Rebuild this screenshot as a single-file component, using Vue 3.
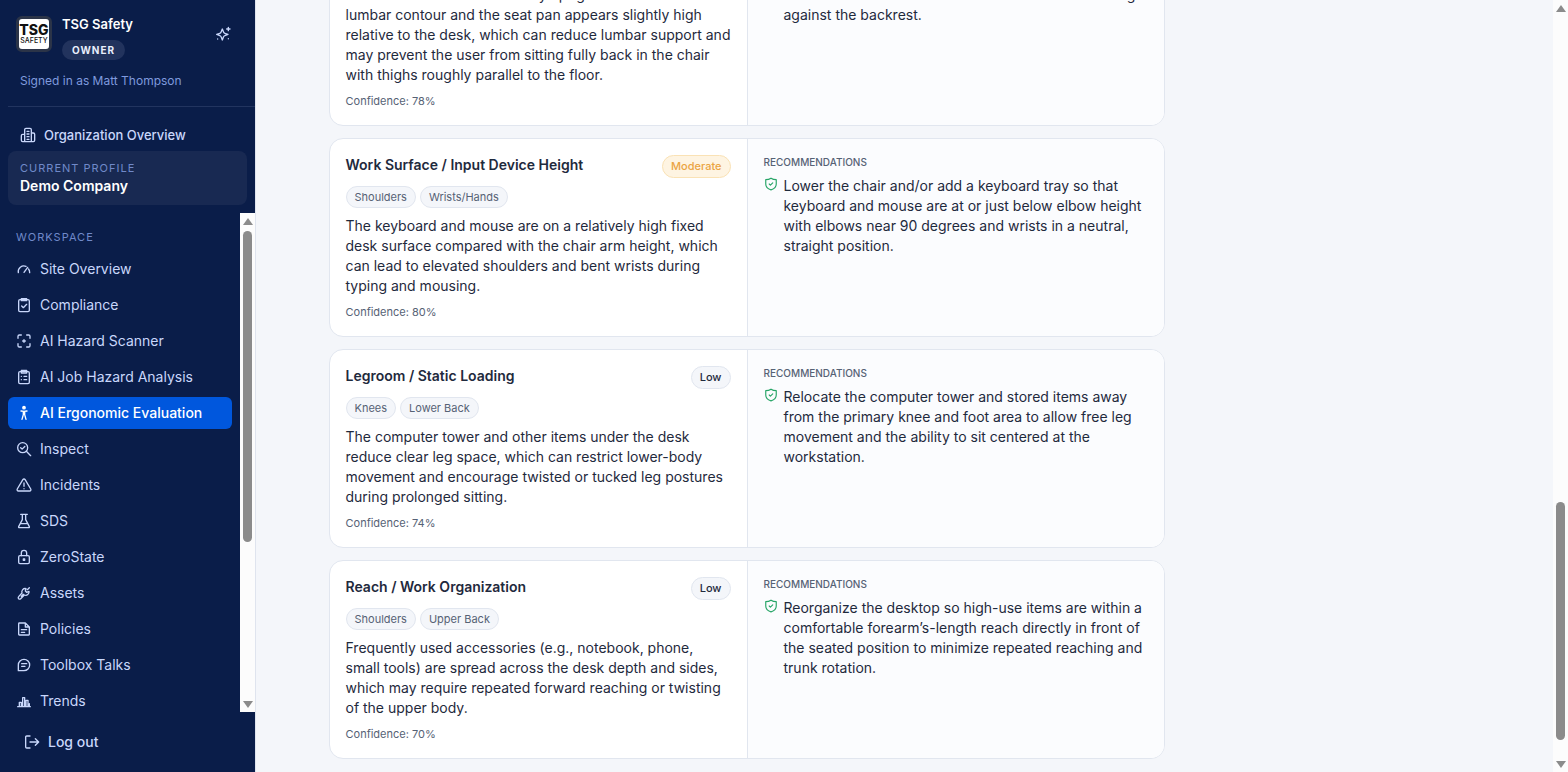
<template>
  <div class="app-shell">
    <aside class="sidebar">
      <header class="sidebar-header">
        <div class="org-row">
          <div class="logo" role="img" aria-label="TSG Safety">
            <span class="logo-top">TSG</span>
            <span class="logo-bottom">SAFETY</span>
          </div>
          <div class="org-info">
            <div class="org-name">TSG Safety</div>
            <span class="role-badge">OWNER</span>
          </div>
          <button class="icon-btn" type="button" aria-label="What's new">
            <svg class="icon" viewBox="0 0 24 24">
              <path d="M11 4.500 12.800 9a3 3 0 0 0 1.900 1.900L19.500 12.500l-4.800 1.800a3 3 0 0 0-1.900 1.900L11 21l-1.800-4.800a3 3 0 0 0-1.900-1.900L2.500 12.500l4.800-1.600A3 3 0 0 0 9.200 9z" />
              <path d="M20 2v5M17.500 4.500h5M20 19v.1M4 19.500v.1" />
            </svg>
          </button>
        </div>
        <p class="signed-in">Signed in as Matt Thompson</p>
      </header>

      <a class="org-link" href="#organization">
        <svg class="icon" viewBox="0 0 24 24" v-html="icons.building"></svg>
        <span>Organization Overview</span>
      </a>

      <div class="profile">
        <div class="profile-label">CURRENT PROFILE</div>
        <div class="profile-name">Demo Company</div>
      </div>

      <div class="nav-area">
        <nav class="nav">
          <div class="nav-heading">WORKSPACE</div>
          <a
            v-for="item in navItems"
            :key="item.label"
            :href="'#' + item.icon"
            class="nav-item"
            :class="{ active: item.active }"
          >
            <svg class="icon" viewBox="0 0 24 24" v-html="icons[item.icon]"></svg>
            <span>{{ item.label }}</span>
          </a>
        </nav>
        <div class="scrollbar" aria-hidden="true">
          <span class="arrow up"></span>
          <div class="track">
            <div class="thumb nav-thumb"></div>
          </div>
          <span class="arrow down"></span>
        </div>
      </div>

      <button class="logout" type="button">
        <svg class="icon" viewBox="0 0 24 24" v-html="icons.logout"></svg>
        <span>Log out</span>
      </button>
    </aside>

    <main class="main">
      <div class="content">
        <div class="findings">
          <article v-for="finding in findings" :key="finding.title" class="finding">
            <section class="finding-detail">
              <div class="finding-head">
                <h3>{{ finding.title }}</h3>
                <span class="badge" :class="finding.severity.toLowerCase()">{{ finding.severity }}</span>
              </div>
              <div class="tags">
                <span v-for="tag in finding.tags" :key="tag" class="tag">{{ tag }}</span>
              </div>
              <p class="description">{{ finding.description }}</p>
              <p class="confidence">Confidence: {{ finding.confidence }}%</p>
            </section>
            <section class="finding-recs">
              <h4>RECOMMENDATIONS</h4>
              <ul>
                <li v-for="rec in finding.recommendations" :key="rec">
                  <svg class="icon shield" viewBox="0 0 24 24" v-html="icons.shield"></svg>
                  <span>{{ rec }}</span>
                </li>
              </ul>
            </section>
          </article>
        </div>
      </div>
    </main>

    <div class="scrollbar page-scrollbar" aria-hidden="true">
      <span class="arrow up"></span>
      <div class="track at-end">
        <div class="thumb page-thumb"></div>
      </div>
      <span class="arrow down"></span>
    </div>
  </div>
</template>

<script setup>
import { ref } from 'vue'

const icons = {
  building: '<path d="M7 22V4a2 2 0 0 1 2-2h6a2 2 0 0 1 2 2v18M7 11H4a2 2 0 0 0-2 2v7a2 2 0 0 0 2 2h16a2 2 0 0 0 2-2v-9a2 2 0 0 0-2-2h-3M10.500 6.500h3M10.500 10.500h3M10.500 14.500h3M10.500 18.500h3"/>',
  overview: '<path d="M3.500 17.500a8.500 8.500 0 0 1 11.500-9.400M20.500 17.500a8.500 8.500 0 0 0-1.700-5.500M12 17l5.500-7.500"/>',
  compliance: '<rect x="4" y="4" width="16" height="18" rx="2"/><path d="M8 2.500h8v3H8z" fill="currentColor"/><path d="M8.500 13.500l2.500 2.500 5-5"/>',
  scanner: '<path d="M3 8V5a2 2 0 0 1 2-2h3M16 3h3a2 2 0 0 1 2 2v3M21 16v3a2 2 0 0 1-2 2h-3M8 21H5a2 2 0 0 1-2-2v-3M12 10v4M10 12h4"/>',
  analysis: '<rect x="4" y="4" width="16" height="18" rx="2"/><path d="M8 2h8v4H8zM8 11h.1M8 16h.1M12 11h4M12 16h4"/>',
  ergonomic: '<circle cx="12" cy="4" r="1.800" fill="currentColor"/><path d="M7.500 9 12 9.500l4.500-.5M12 9.500V14M11 9.500v5L9 21.500M13 9.500v5l2 7"/>',
  inspect: '<circle cx="10" cy="10" r="7.500"/><path d="m15.500 15.500 6.500 6.500M7 10l2.200 2.200L13.200 8.200"/>',
  incidents: '<path d="M10.300 4 1.900 18a2 2 0 0 0 1.700 3h16.800a2 2 0 0 0 1.700-3L13.700 4a2 2 0 0 0-3.400 0zM12 9v5M12 17.500v.1"/>',
  sds: '<path d="M7 2h10M9.500 2v8L4 20.500c-.4.800 0 1.500 1 1.500h14c1 0 1.400-.7 1-1.500L14.500 10V2M7.500 16h9"/>',
  zerostate: '<rect x="4" y="10" width="16" height="12" rx="2"/><path d="M8 10V6a4 4 0 0 1 8 0v4"/><rect x="11" y="15" width="2" height="2" fill="currentColor"/>',
  assets: '<path d="M15 5.500a5 5 0 0 0-6 6.500l-5 5.500a2 2 0 0 0 3 3l5.500-5.500a5 5 0 0 0 7-5.500L16 11l-2-2zM17 7l3-3M8 17l3-3"/>',
  policies: '<path d="M14 3H5a1 1 0 0 0-1 1v16a1 1 0 0 0 1 1h14a1 1 0 0 0 1-1V9zM14 3v6h6M8 13h8M8 17h5"/>',
  talks: '<path d="M3.500 20.500V12a8.500 8.500 0 1 1 8.500 8.500zM8.500 10h7.500M8.500 14h5"/>',
  trends: '<path d="M2.500 20.500h19M5 20v-6h3v6M10 20V7h3v13M15 20v-9h3v9M20 20v-4"/>',
  logout: '<path d="M9 3H4a1.500 1.500 0 0 0-1.500 1.500v15A1.500 1.500 0 0 0 4 21h5M9 12h13M17 7l5 5-5 5"/>',
  shield: '<path d="M12 2c3 2 6 2.500 9 2.500V12c0 5-4 8.500-9 10-5-1.500-9-5-9-10V4.500C6 4.500 9 4 12 2zM9 12l2 2 4-4"/>'
}

const navItems = ref([
  { label: 'Site Overview', icon: 'overview' },
  { label: 'Compliance', icon: 'compliance' },
  { label: 'AI Hazard Scanner', icon: 'scanner' },
  { label: 'AI Job Hazard Analysis', icon: 'analysis' },
  { label: 'AI Ergonomic Evaluation', icon: 'ergonomic', active: true },
  { label: 'Inspect', icon: 'inspect' },
  { label: 'Incidents', icon: 'incidents' },
  { label: 'SDS', icon: 'sds' },
  { label: 'ZeroState', icon: 'zerostate' },
  { label: 'Assets', icon: 'assets' },
  { label: 'Policies', icon: 'policies' },
  { label: 'Toolbox Talks', icon: 'talks' },
  { label: 'Trends', icon: 'trends' }
])

const findings = ref([
  {
    title: 'Seating / Back Support',
    severity: 'Moderate',
    tags: ['Lower Back'],
    description: 'The chair back looks relatively upright with little visible lumbar contour and the seat pan appears slightly high relative to the desk, which can reduce lumbar support and may prevent the user from sitting fully back in the chair with thighs roughly parallel to the floor.',
    confidence: 78,
    recommendations: [
      'Lower the seat slightly and add a lumbar cushion so that both feet rest flat on the floor.',
      'Have the office worker sit with the lower back resting against the backrest.'
    ]
  },
  {
    title: 'Work Surface / Input Device Height',
    severity: 'Moderate',
    tags: ['Shoulders', 'Wrists/Hands'],
    description: 'The keyboard and mouse are on a relatively high fixed desk surface compared with the chair arm height, which can lead to elevated shoulders and bent wrists during typing and mousing.',
    confidence: 80,
    recommendations: ['Lower the chair and/or add a keyboard tray so that keyboard and mouse are at or just below elbow height with elbows near 90 degrees and wrists in a neutral, straight position.']
  },
  {
    title: 'Legroom / Static Loading',
    severity: 'Low',
    tags: ['Knees', 'Lower Back'],
    description: 'The computer tower and other items under the desk reduce clear leg space, which can restrict lower-body movement and encourage twisted or tucked leg postures during prolonged sitting.',
    confidence: 74,
    recommendations: ['Relocate the computer tower and stored items away from the primary knee and foot area to allow free leg movement and the ability to sit centered at the workstation.']
  },
  {
    title: 'Reach / Work Organization',
    severity: 'Low',
    tags: ['Shoulders', 'Upper Back'],
    description: 'Frequently used accessories (e.g., notebook, phone, small tools) are spread across the desk depth and sides, which may require repeated forward reaching or twisting of the upper body.',
    confidence: 70,
    recommendations: ['Reorganize the desktop so high-use items are within a comfortable forearm’s-length reach directly in front of the seated position to minimize repeated reaching and trunk rotation.']
  }
])
</script>

<style>
body {
  margin: 0;
  background: #f4f6fa;
}
</style>

<style scoped>
.app-shell {
  display: flex;
  height: 100vh;
  overflow: hidden;
  font-family: Inter, "Liberation Sans", sans-serif;
  font-size: 14px;
  line-height: 20px;
  color: #1f2a3d;
}

.app-shell * {
  box-sizing: border-box;
}

h3,
h4,
p,
ul {
  margin: 0;
  padding: 0;
}

button {
  border: 0;
  padding: 0;
  background: none;
  font: inherit;
  cursor: pointer;
}

a {
  color: inherit;
  text-decoration: none;
}

.icon {
  flex: none;
  width: 16px;
  height: 16px;
  fill: none;
  stroke: currentColor;
  stroke-width: 2;
  stroke-linecap: round;
  stroke-linejoin: round;
}

/* Sidebar */
.sidebar {
  display: flex;
  flex-direction: column;
  flex: none;
  width: 256px;
  border-right: 1px solid #dfe4ee;
  background: #0a1d49;
  color: #c9d7fb;
  font-weight: 500;
}

.sidebar-header {
  margin-left: 8px;
  padding: 14px 24px 16px 8px;
  border-bottom: 1px solid #22345f;
}

.org-row {
  display: flex;
  align-items: flex-start;
  gap: 10px;
}

.logo {
  display: flex;
  flex-direction: column;
  align-items: center;
  justify-content: center;
  width: 36px;
  height: 36px;
  margin-top: 2px;
  border: 3px solid #2b3448;
  border-radius: 6px;
  background: #fff;
  color: #111;
}

.logo-top {
  font-size: 14px;
  font-weight: 800;
  line-height: 14px;
}

.logo-bottom {
  font-size: 7px;
  font-weight: 500;
  line-height: 8px;
}

.org-info {
  flex: 1;
}

.org-name {
  color: #fff;
  font-size: 13px;
  font-weight: 600;
  margin-bottom: 6px;
}

.role-badge {
  display: block;
  width: fit-content;
  padding: 0 10px;
  border-radius: 10px;
  background: #22335d;
  color: #e8eefc;
  font-size: 10px;
  font-weight: 700;
  letter-spacing: 1px;
  line-height: 20px;
}

.icon-btn {
  display: flex;
  align-items: center;
  height: 40px;
  color: #c9d7fb;
}

.signed-in {
  margin: 12px 0 0 4px;
  color: #7f9ade;
  font-size: 12px;
  font-weight: 400;
  line-height: 18px;
}

.org-link {
  display: flex;
  align-items: center;
  gap: 8px;
  margin-top: 12px;
  padding: 6px 20px;
  font-size: 13px;
}

.profile {
  margin: 0 8px;
  padding: 9px 12px;
  border-radius: 8px;
  background: #182952;
}

.profile-label,
.nav-heading {
  color: #7089c9;
  font-size: 11px;
  font-weight: 400;
  letter-spacing: 1px;
  line-height: 16px;
}

.profile-name {
  color: #fff;
  font-weight: 600;
}

.nav-area {
  display: flex;
  flex: 1;
  min-height: 0;
  margin-top: 8px;
}

.nav {
  display: flex;
  flex: 1;
  flex-direction: column;
  gap: 4px;
  padding: 16px 8px 0;
  overflow: hidden;
}

.nav-heading {
  padding: 0 8px;
  margin-bottom: 4px;
}

.nav-item {
  display: flex;
  flex: none;
  align-items: center;
  gap: 8px;
  height: 32px;
  padding: 0 8px;
  border-radius: 6px;
  font-weight: 400;
}

.nav-item.active {
  background: #0057dd;
  color: #fff;
  font-weight: 500;
}

.logout {
  display: flex;
  flex: none;
  align-items: center;
  gap: 8px;
  height: 60px;
  padding: 0 24px;
  color: #c9d7fb;
  font-weight: 500;
}

/* Scrollbars */
.scrollbar {
  display: flex;
  flex: none;
  flex-direction: column;
  align-items: center;
  width: 15px;
  padding: 5px 0 4px;
  background: #fcfcfc;
}

.track {
  display: flex;
  flex: 1;
  flex-direction: column;
  padding: 6px 0;
}

.track.at-end {
  justify-content: flex-end;
  padding-bottom: 21px;
}

.thumb {
  width: 9px;
  border-radius: 5px;
  background: #8b8b8b;
}

.nav-thumb {
  height: 67%;
}

.page-thumb {
  height: 33%;
}

.arrow {
  border: 5px solid transparent;
}

.arrow.up {
  border-top: 0;
  border-bottom: 7px solid #8b8b8b;
}

.arrow.down {
  border-bottom: 0;
  border-top: 7px solid #8b8b8b;
}

/* Findings, scrolled to the end of the list */
.main {
  display: flex;
  flex: 1;
  flex-direction: column;
  justify-content: flex-end;
  min-width: 0;
  padding-bottom: 13px;
  overflow: hidden;
  background: #f4f6fa;
}

.content {
  display: grid;
  grid-template-columns: minmax(0, 1fr) 300px;
  gap: 16px;
  width: 100%;
  max-width: 1152px;
  margin: 0 auto;
}

.findings {
  display: flex;
  flex-direction: column;
  gap: 12px;
}

.finding {
  display: grid;
  grid-template-columns: 1fr 1fr;
  border: 1px solid #e1e6ef;
  border-radius: 14px;
  background: #fff;
  overflow: hidden;
}

.finding-detail,
.finding-recs {
  padding: 16px;
}

.finding-recs {
  border-left: 1px solid #e1e6ef;
  background: #fbfcfe;
}

.finding-head {
  display: flex;
  align-items: flex-start;
  justify-content: space-between;
  gap: 8px;
}

.finding-head h3 {
  font-size: 14px;
  font-weight: 600;
  line-height: 20px;
}

.badge,
.tag {
  padding: 0 8px;
  border: 1px solid #e1e6ef;
  border-radius: 12px;
  background: #f4f6fa;
  font-size: 11px;
  line-height: 20px;
}

.badge {
  font-weight: 500;
  line-height: 21px;
}

.badge.moderate {
  border-color: #fae2b5;
  background: #fef4e2;
  color: #eba443;
}

.tags {
  display: flex;
  gap: 4px;
  margin-top: 8px;
}

.tag {
  color: #566275;
}

.description {
  margin-top: 8px;
}

.confidence {
  margin-top: 8px;
  color: #566275;
  font-size: 11px;
  line-height: 16px;
}

.finding-recs h4 {
  color: #566275;
  font-size: 10px;
  font-weight: 500;
  line-height: 15px;
}

.finding-recs ul {
  margin-top: 6px;
  list-style: none;
}

.finding-recs li {
  display: flex;
  gap: 6px;
}

.shield {
  width: 14px;
  height: 14px;
  margin-top: 1px;
  color: #27a567;
}
</style>
